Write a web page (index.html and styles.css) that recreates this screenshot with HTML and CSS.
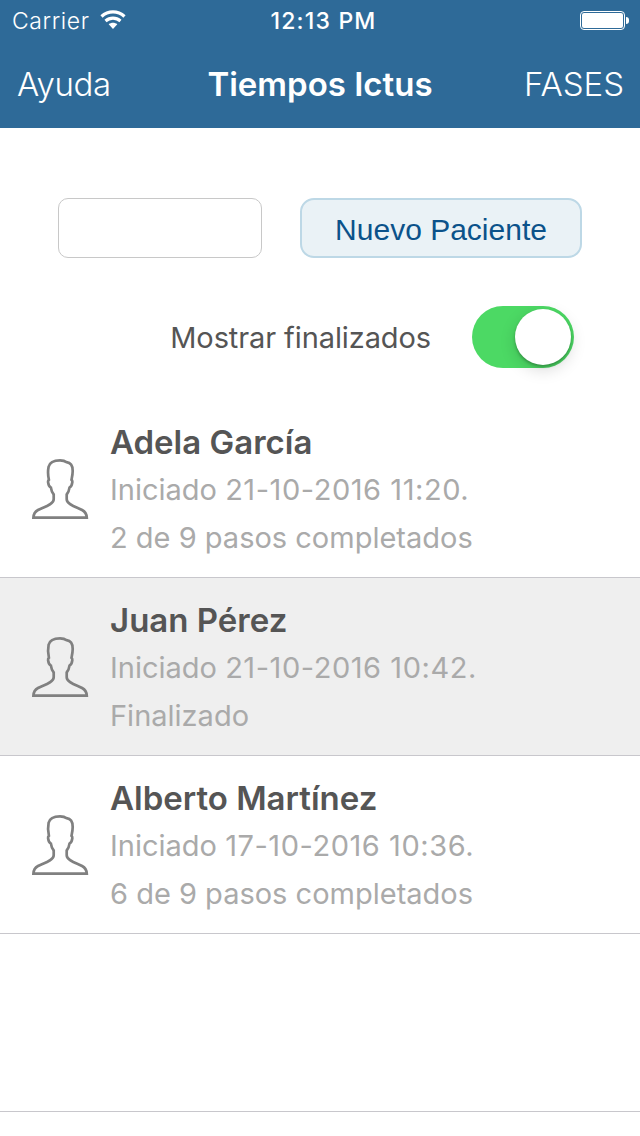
FILE: index.html
```html
<!DOCTYPE html>
<html lang="es">
<head>
    <meta charset="utf-8">
    <title>Tiempos Ictus</title>
    <link rel="stylesheet" href="styles.css">
</head>
<body>
    <svg class="defs" width="0" height="0">
        <symbol id="person" viewBox="0 0 60 62">
            <path d="M3.4 59.7C3.6 55.5 5 53.6 8 52C12.5 49.5 23.7 46.8 23.7 41.3V36.5C22.2 34.8 21.3 32.4 20.9 29.6C19.2 28.6 18.4 26.6 18.1 24.3C17.9 23.1 18.3 22.4 18.9 21.8C18.1 18.4 17.8 13 18.6 8.8C19.8 3.9 25.2 2.3 30 2.3C33.5 2.3 35.3 3.1 36.6 4.2C41.4 4.7 42.7 8.5 42.7 13C42.7 16.5 42 19.4 41.5 21.8C42.1 22.4 42.5 23.1 42.3 24.3C42 26.6 41.2 28.6 39.5 29.6C39.1 32.4 38.2 34.8 36.7 36.5V41.3C36.7 46.8 47.6 49.5 52.1 52C55.1 53.6 56.6 55.5 56.8 59.7Z"/>
        </symbol>
    </svg>

    <header class="header">
        <div class="status-bar">
            <div class="carrier">
                <span>Carrier</span>
                <svg class="wifi" width="26" height="20" viewBox="0 0 26 20">
                    <path d="M1.5 6.4C8.2 0.4 17.8 0.4 24.5 6.4" stroke-width="3.3"/>
                    <path d="M5.5 11C10 7.1 16 7.1 20.5 11" stroke-width="3.1"/>
                    <path class="dot" d="M8.7 14.3C11.2 12.3 14.8 12.3 17.3 14.3L13 18.9Z"/>
                </svg>
            </div>
            <span class="time">12:13 PM</span>
            <div class="battery">
                <div class="battery-body"><div class="battery-level"></div></div>
                <div class="battery-tip"></div>
            </div>
        </div>
        <nav class="nav-bar">
            <a class="nav-left">Ayuda</a>
            <h1>Tiempos Ictus</h1>
            <a class="nav-right">FASES</a>
        </nav>
    </header>

    <div class="new-patient">
        <input class="patient-input" type="text">
        <button class="patient-button">Nuevo Paciente</button>
    </div>

    <div class="filter">
        <span class="filter-label">Mostrar finalizados</span>
        <div class="switch"><div class="knob"></div></div>
    </div>

    <div class="patients">
        <div class="patient">
            <svg class="avatar"><use href="#person"/></svg>
            <div class="info">
                <h2>Adela García</h2>
                <p>Iniciado <span class="date">21-10-2016 11:20.</span></p>
                <p>2 de 9 pasos completados</p>
            </div>
        </div>
        <div class="patient finished">
            <svg class="avatar"><use href="#person"/></svg>
            <div class="info">
                <h2>Juan Pérez</h2>
                <p>Iniciado <span class="date">21-10-2016 10:42.</span></p>
                <p>Finalizado</p>
            </div>
        </div>
        <div class="patient">
            <svg class="avatar"><use href="#person"/></svg>
            <div class="info">
                <h2>Alberto Martínez</h2>
                <p>Iniciado <span class="date">17-10-2016 10:36.</span></p>
                <p>6 de 9 pasos completados</p>
            </div>
        </div>
        <div class="patient"></div>
    </div>
</body>
</html>
```
FILE: styles.css
```css
* {
    box-sizing: border-box;
}
body {
    margin: 0;
    height: 1136px;
    overflow: hidden;
    background-color: #fff;
    font-family: Inter, "Liberation Sans", sans-serif;
    color: #555;
}
.defs {
    display: block;
}
.header {
    height: 128px;
    background-color: #2e6a98;
    color: #fff;
}
.status-bar {
    display: grid;
    grid-template-columns: 1fr auto 1fr;
    align-items: center;
    height: 41px;
    padding: 0 11px 0 12px;
    font-size: 23px;
}
.carrier {
    display: flex;
    align-items: center;
    gap: 10px;
    font-weight: 300;
    letter-spacing: 0.6px;
}
.wifi {
    margin-bottom: 1px;
}
.wifi path {
    fill: none;
    stroke: #fff;
}
.wifi .dot {
    fill: #fff;
    stroke: none;
}
.time {
    padding-left: 6px;
    font-weight: 500;
    letter-spacing: 1.2px;
}
.battery {
    display: flex;
    justify-content: flex-end;
    align-items: center;
    gap: 1px;
}
.battery-body {
    width: 45px;
    height: 19px;
    padding: 1px;
    border: 1px solid #fff;
    border-radius: 4px;
}
.battery-level {
    height: 100%;
    border-radius: 2px;
    background-color: #fff;
}
.battery-tip {
    width: 3px;
    height: 7px;
    border-radius: 0 3px 3px 0;
    background-color: #fff;
}
.nav-bar {
    display: grid;
    grid-template-columns: 1fr auto 1fr;
    align-items: center;
    height: 85px;
    padding: 0 16px 0 17px;
    font-size: 33px;
    font-weight: 300;
}
.nav-bar h1 {
    margin: 0 1px 0 0;
    font-size: 33px;
    font-weight: 600;
}
.nav-left {
    letter-spacing: -0.4px;
}
.nav-right {
    text-align: right;
}
.new-patient {
    display: flex;
    justify-content: space-between;
    padding: 70px 58px 0;
}
.patient-input {
    width: 204px;
    height: 60px;
    border: 1px solid #c8c8c8;
    border-radius: 10px;
    background-color: #fff;
}
.patient-button {
    width: 282px;
    height: 60px;
    padding: 3px 0 0;
    border: 2px solid #bdd8e6;
    border-radius: 14px;
    background-color: #eaf2f6;
    color: #0b528a;
    font-family: "Liberation Sans", Arial, sans-serif;
    font-size: 30px;
}
.filter {
    display: flex;
    justify-content: flex-end;
    align-items: center;
    gap: 41px;
    height: 62px;
    margin-top: 48px;
    padding-right: 66px;
}
.filter-label {
    font-size: 29px;
    letter-spacing: -0.1px;
}
.switch {
    display: flex;
    justify-content: flex-end;
    width: 102px;
    height: 62px;
    padding: 3px;
    border-radius: 31px;
    background-color: #4cd964;
}
.knob {
    width: 56px;
    height: 56px;
    border-radius: 50%;
    background-color: #fff;
    box-shadow: 0 2px 3px rgba(0,0,0,0.25), 0 5px 16px rgba(0,0,0,0.15);
}
.patients {
    margin-top: 32px;
}
.patient {
    display: flex;
    height: 178px;
    padding-left: 30px;
    border-bottom: 1px solid #c8c7cc;
}
.finished {
    background-color: #efefef;
}
.avatar {
    width: 60px;
    height: 62px;
    margin-top: 58px;
    fill: none;
    stroke: #808080;
    stroke-width: 2.7;
}
.info {
    padding: 18px 0 0 20px;
}
.info h2 {
    margin: 0;
    font-size: 33px;
    font-weight: 600;
    line-height: 48px;
}
.info p {
    margin: 0;
    color: #aaa;
    font-size: 29px;
    line-height: 48px;
}
.info .date {
    letter-spacing: 0.55px;
}
```
